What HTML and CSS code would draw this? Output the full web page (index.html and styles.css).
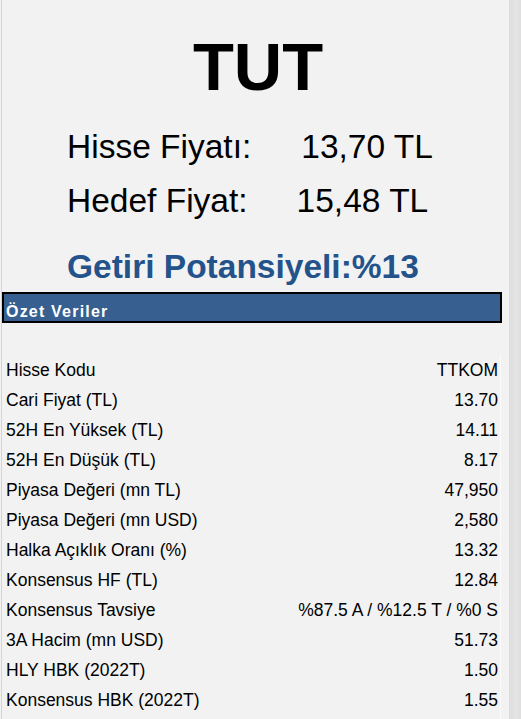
FILE: index.html
```html
<!DOCTYPE html>
<html lang="tr">
<head>
<meta charset="utf-8">
<title>TUT - TTKOM</title>
<link rel="stylesheet" href="styles.css">
</head>
<body>
<div class="page">
  <main class="main">
    <h1 class="title">TUT</h1>
    <div class="prices">
      <div class="price-row price-row--a"><span>Hisse Fiyatı:</span><span>13,70 TL</span></div>
      <div class="price-row price-row--b"><span>Hedef Fiyat:</span><span>15,48 TL</span></div>
    </div>
    <div class="potential">Getiri Potansiyeli:%13</div>
    <div class="section-head">Özet Veriler</div>
    <div class="data">
      <div class="row"><span>Hisse Kodu</span><span>TTKOM</span></div>
      <div class="row"><span>Cari Fiyat (TL)</span><span>13.70</span></div>
      <div class="row"><span>52H En Yüksek (TL)</span><span>14.11</span></div>
      <div class="row"><span>52H En Düşük (TL)</span><span>8.17</span></div>
      <div class="row"><span>Piyasa Değeri (mn TL)</span><span>47,950</span></div>
      <div class="row"><span>Piyasa Değeri (mn USD)</span><span>2,580</span></div>
      <div class="row"><span>Halka Açıklık Oranı (%)</span><span>13.32</span></div>
      <div class="row"><span>Konsensus HF (TL)</span><span>12.84</span></div>
      <div class="row"><span>Konsensus Tavsiye</span><span>%87.5 A / %12.5 T / %0 S</span></div>
      <div class="row"><span>3A Hacim (mn USD)</span><span>51.73</span></div>
      <div class="row"><span>HLY HBK (2022T)</span><span>1.50</span></div>
      <div class="row"><span>Konsensus HBK (2022T)</span><span>1.55</span></div>
    </div>
  </main>
  <div class="edge"></div>
</div>
</body>
</html>
```

FILE: styles.css
```css
* { box-sizing: border-box; }

html, body {
  margin: 0;
  padding: 0;
  background: #f2f2f2;
}

body {
  width: 521px;
  height: 719px;
  overflow: hidden;
  font-family: "Liberation Sans", Arial, sans-serif;
  color: #000;
}

.page {
  display: flex;
  height: 719px;
}

.main {
  width: 508px;
  margin-left: 1px;
  border-left: 1px solid #d4d4d4;
  display: flex;
  flex-direction: column;
}

.edge {
  flex: 1;
  background: linear-gradient(to right, #dcdcdc, #e4e4e4 60%, #dedede);
}

.title {
  margin: 0;
  padding: 33px 0 0 5px;
  font-size: 67px;
  line-height: 67px;
  font-weight: bold;
  text-align: center;
}

.prices {
  margin-top: 20px;
  padding-left: 65px;
  font-size: 33.5px;
  line-height: 54px;
}

.price-row {
  display: flex;
}

.price-row--a { gap: 50px; }
.price-row--b { gap: 49px; }

.potential {
  margin-top: 19px;
  padding-left: 65px;
  font-size: 33.5px;
  line-height: 40px;
  font-weight: bold;
  color: #24538b;
}

.section-head {
  margin-top: 5px;
  width: 500px;
  height: 31px;
  border: 2px solid #000;
  background: #376091;
  color: #fff;
  font-size: 16px;
  font-weight: bold;
  letter-spacing: 1.2px;
  line-height: 18px;
  padding: 9px 0 0 2px;
}

.data {
  margin-top: 32px;
  width: 499px;
  border-right: 1px solid #fbfbfb;
  padding: 0 2px 0 4px;
  font-size: 17.5px;
  line-height: 30px;
  flex: 1;
}

.row {
  display: flex;
  justify-content: space-between;
}
```
